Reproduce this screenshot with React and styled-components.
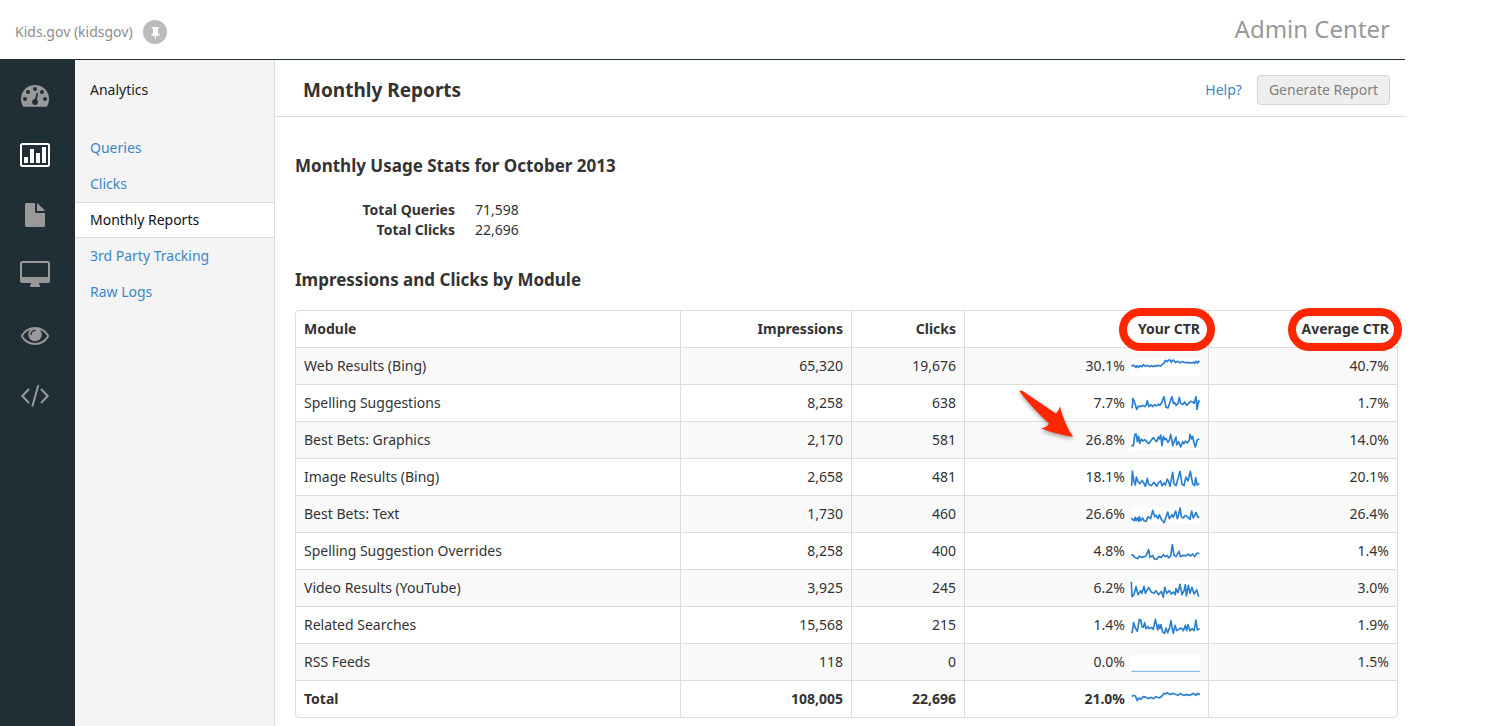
import React from "react";
import styled, { createGlobalStyle, css } from "styled-components";

const GlobalStyle = createGlobalStyle`
  * { box-sizing: border-box; }
  body {
    margin: 0;
    background: #fff;
    color: #333;
    font-family: "Noto Sans", "Open Sans", sans-serif;
    font-size: 14px;
    line-height: 20px;
  }
  a { color: #3a87c8; text-decoration: none; }
  h1, h2, h3, ul, dl, dd, p { margin: 0; padding: 0; }
`;

const Page = styled.div`
  display: flex;
  flex-direction: column;
  min-height: 100vh;
  margin-right: 82px;
`;

const TopBar = styled.header`
  display: flex;
  align-items: center;
  justify-content: space-between;
  height: 60px;
  padding: 0 15px;
  border-bottom: 1px solid #202f36;
`;

const Site = styled.div`
  display: flex;
  align-items: center;
  gap: 10px;
  padding-top: 4px;
  color: #8c8c8c;
`;

const PinButton = styled.button`
  display: block;
  width: 24px;
  height: 24px;
  padding: 0;
  border: 0;
  border-radius: 50%;
  background: #bbb;
`;

const Brand = styled.div`
  padding-bottom: 2px;
  color: #999;
  font-size: 24px;
  line-height: 30px;
`;

const Body = styled.div`
  display: flex;
  flex: 1;
`;

const Rail = styled.nav`
  flex: none;
  width: 75px;
  padding-top: 6px;
  background: #202f36;
`;

const RailLink = styled.a`
  display: flex;
  align-items: center;
  height: 60px;
  padding-left: 20px;
  color: ${(p) => (p.$active ? "#fff" : "#999")};
`;

const Side = styled.nav`
  flex: none;
  width: 200px;
  background: #f4f4f4;
  border-right: 1px solid #ddd;
`;

const SideTitle = styled.h2`
  padding: 20px 15px 30px;
  font-size: 14px;
  line-height: 20px;
  font-weight: 400;
  color: #222;
`;

const SideList = styled.ul`
  list-style: none;
`;

const SideLink = styled.a`
  display: block;
  height: 36px;
  padding: 7px 15px;
  border: solid transparent;
  border-width: 1px 0;
  ${(p) =>
    p.$active &&
    css`
      background: #fff;
      border-color: #ddd;
      color: #111;
    `}
`;

const Main = styled.main`
  flex: 1;
  min-width: 0;
`;

const MainHeader = styled.div`
  display: flex;
  align-items: center;
  height: 57px;
  padding: 4px 15px 0 28px;
  border-bottom: 1px solid #ddd;
`;

const Title = styled.h1`
  flex: 1;
  font-size: 19px;
  line-height: 24px;
  font-weight: 700;
`;

const Help = styled.a`
  margin-right: 15px;
`;

const Generate = styled.button`
  height: 30px;
  padding: 0 11px;
  border: 1px solid #d4d4d4;
  border-radius: 4px;
  background: #eee;
  color: #808080;
  font: inherit;
`;

const Content = styled.div`
  padding: 39px 7px 8px 20px;
`;

const Heading = styled.h3`
  font-size: 17px;
  line-height: 20px;
  font-weight: 700;
`;

const Stats = styled.dl`
  display: grid;
  grid-template-columns: 160px 1fr;
  column-gap: 20px;
  margin: 24px 0 30px;
`;

const StatName = styled.dt`
  font-weight: 700;
  text-align: right;
`;

const Table = styled.table`
  width: 100%;
  margin-top: 20px;
  table-layout: fixed;
  border: 1px solid #ddd;
  border-radius: 4px;
  border-spacing: 0;

  th, td {
    position: relative;
    height: 37px;
    padding: 8px;
    border-top: 1px solid #ddd;
    border-left: 1px solid #ddd;
    text-align: right;
    line-height: 20px;
  }
  thead th { height: 36px; border-top: 0; }
  th:first-child, td:first-child { border-left: 0; text-align: left; }
  tbody tr:nth-child(odd) td { background: #f9f9f9; }
  tfoot td { font-weight: 700; }
`;

const Col = styled.col`
  width: ${(p) => p.$w}px;
`;

const Rate = styled.div`
  display: flex;
  justify-content: flex-end;
  align-items: flex-end;
  gap: 5px;
`;

const Spark = styled.svg`
  display: block;
  background: #fff;
`;

const Ring = styled.span`
  position: absolute;
  top: -3px;
  right: ${(p) => p.$right}px;
  width: ${(p) => p.$width}px;
  height: 43px;
  border: 8px solid #ff2600;
  border-radius: 22px;
  z-index: 1;
`;

const Arrow = styled.svg`
  position: absolute;
  top: -34px;
  left: 52px;
  z-index: 1;
  filter: drop-shadow(0 2px 2px rgba(0, 0, 0, 0.35));
`;

const icons = {
  Dashboard: (
    <path
      fill="currentColor"
      fillRule="evenodd"
      d="M15 4A14 14 0 0 0 1 18c0 2.900.8 5.400 2 7.200.2.300.5.500.9.500h22.200c.4 0 .7-.2.900-.5 1.200-1.800 2-4.300 2-7.200A14 14 0 0 0 15 4ZM5 16a2 2 0 1 1 0 4 2 2 0 0 1 0-4ZM8 9a2 2 0 1 1 0 4 2 2 0 0 1 0-4ZM15 6a2 2 0 1 1 0 4 2 2 0 0 1 0-4ZM22 9a2 2 0 1 1 0 4 2 2 0 0 1 0-4ZM25 16a2 2 0 1 1 0 4 2 2 0 0 1 0-4ZM16.500 12.200 15 18A3 3 0 1 0 17 18.700L18 12.600A.8.8 0 0 0 16.500 12.200Z"
    />
  ),
  Analytics: (
    <>
      <rect x="1" y="3" width="28" height="22" rx="1.500" fill="none" stroke="currentColor" strokeWidth="2" />
      <path fill="currentColor" d="M4 16h4v6H4zM10 8h4v14h-4zM16 12h4v10h-4zM22 6h4v16h-4z" />
    </>
  ),
  Content: (
    <path
      fill="currentColor"
      d="M6.500 2H15v8.500a1.500 1.500 0 0 0 1.500 1.500H25v12.500a1.500 1.500 0 0 1-1.500 1.500h-17A1.500 1.500 0 0 1 5 24.500v-21A1.500 1.500 0 0 1 6.500 2ZM17 2.200c.4.100.7.300 1 .6l6.300 6.300c.3.300.5.600.6.900H17Z"
    />
  ),
  Display: (
    <path
      fill="currentColor"
      fillRule="evenodd"
      d="M2.500 0h25A2.500 2.500 0 0 1 30 2.500v17a2.500 2.500 0 0 1-2.500 2.500H19c0 1.500 1 2.300 1 3s-.4 1-1 1h-8c-.6 0-1-.3-1-1s1-1.500 1-3H2.500A2.500 2.500 0 0 1 0 19.500v-17A2.500 2.500 0 0 1 2.500 0ZM2.500 2a.5.5 0 0 0-.5.5v13a.5.5 0 0 0 .5.5h25a.5.5 0 0 0 .5-.5v-13a.5.5 0 0 0-.5-.5Z"
    />
  ),
  Preview: (
    <>
      <path
        fill="none"
        stroke="currentColor"
        strokeWidth="2"
        d="M2.200 14.200C5 9.800 9.700 7 15 7s10 2.800 12.800 7.200c.3.500.3 1.100 0 1.600C25 20.200 20.300 23 15 23S5 20.200 2.200 15.800c-.3-.5-.3-1.100 0-1.600Z"
      />
      <circle cx="15" cy="13.500" r="6.800" fill="currentColor" />
      <path d="M11 13.500a4 4 0 0 1 4-4" fill="none" stroke="#202f36" strokeWidth="1.300" strokeLinecap="round" />
    </>
  ),
  Code: (
    <path
      fill="none"
      stroke="currentColor"
      strokeWidth="2"
      d="M9 8 2.300 15 9 22M21 8l6.700 7L21 22M18.300 4.300l-6 21.200"
    />
  ),
};

const sparks = {
  web: ["12 21", "16,41 24,40 30,46 33,41 38,46 42,41 48,44 52,38 58,43 64,40 70,44 76,41 82,44 86,40 90,43 96,40 104,42 110,36 114,34 118,25 123,29 128,24 132,24 136,31 140,25 144,25 148,32 154,28 162,32 170,29 178,32 186,31 194,33 202,31 207,34 211,28 215,33 220,26"],
  spelling: ["360 48", "366,85 369,55 374,68 380,88 386,78 392,80 398,76 404,80 408,76 412,62 416,80 422,74 428,80 434,74 440,78 446,72 450,76 456,66 462,50 468,82 474,84 480,66 486,50 490,70 494,68 498,76 504,70 508,52 512,70 518,74 524,66 530,76 536,70 542,64 548,66 552,70 558,50 561,88 566,62 569,66"],
  graphics: ["12 24", "16,62 22,62 27,27 31,27 34,50 38,34 41,55 46,42 50,48 56,44 62,50 68,56 76,45 82,38 86,44 92,50 97,36 100,42 104,30 108,62 112,34 116,44 120,40 126,52 130,46 134,28 138,46 140,62 145,48 150,36 152,60 158,50 164,66 170,50 174,56 178,48 184,54 190,46 192,28 197,42 200,34 204,54 208,66 214,44 220,42"],
  image: ["12 135", "17,182 19,138 24,170 28,180 31,156 36,170 42,176 48,166 52,172 58,184 64,160 68,178 76,182 84,172 92,184 98,172 104,168 108,182 114,174 118,180 124,162 128,170 132,184 140,142 144,176 150,182 162,139 168,178 174,182 180,156 186,168 193,139 200,176 206,182 209,158 214,180 220,176"],
  text: ["12 21", "16,54 20,58 24,62 28,52 30,62 34,54 38,64 40,50 44,62 50,54 54,62 60,64 66,50 74,56 80,31 86,50 90,46 96,56 100,44 106,58 114,68 120,52 125,36 130,56 138,44 142,52 149,33 154,56 158,44 162,24 166,50 172,54 178,46 186,52 192,58 197,33 202,54 210,38 216,52 220,52"],
  overrides: ["12 132", "16,166 20,164 26,172 36,176 40,168 46,172 54,170 60,168 68,149 72,172 80,166 84,176 92,178 98,170 106,172 112,164 118,170 124,166 128,174 134,168 139,134 144,166 150,170 159,154 163,170 172,166 180,168 186,162 194,168 200,162 206,170 212,160 220,160"],
  video: ["12 243", "16,245 18,290 24,284 30,260 36,284 44,272 48,280 54,259 58,280 68,262 76,276 84,280 90,272 98,284 106,274 112,292 116,262 122,280 130,272 136,282 142,276 148,284 150,266 156,278 162,253 168,284 174,272 178,254 181,288 187,256 192,280 198,262 204,282 212,270 218,290"],
  related: ["60 36", "66,82 71,50 76,66 82,76 88,40 92,42 96,62 100,64 104,50 108,68 114,62 118,68 124,64 130,70 136,40 140,58 143,72 146,56 150,68 153,56 158,78 164,82 168,66 173,80 178,68 183,44 187,70 190,82 195,58 200,74 206,70 214,66 220,74 226,58 230,74 234,56 240,74 246,68 252,74 258,42 262,72 269,68"],
  rss: ["60 147", "64,196 270,196"],
  total: ["60 258", "66,272 70,268 76,270 82,284 86,276 92,280 100,272 108,274 116,278 122,274 130,278 138,272 148,276 156,270 162,262 168,264 172,260 180,266 186,262 194,264 204,268 212,262 220,268 230,266 240,268 250,262 258,268 262,262 266,266 269,262"],
};

const rows = [
  ["Web Results (Bing)", "65,320", "19,676", "30.1%", "web", "40.7%"],
  ["Spelling Suggestions", "8,258", "638", "7.7%", "spelling", "1.7%"],
  ["Best Bets: Graphics", "2,170", "581", "26.8%", "graphics", "14.0%"],
  ["Image Results (Bing)", "2,658", "481", "18.1%", "image", "20.1%"],
  ["Best Bets: Text", "1,730", "460", "26.6%", "text", "26.4%"],
  ["Spelling Suggestion Overrides", "8,258", "400", "4.8%", "overrides", "1.4%"],
  ["Video Results (YouTube)", "3,925", "245", "6.2%", "video", "3.0%"],
  ["Related Searches", "15,568", "215", "1.4%", "related", "1.9%"],
  ["RSS Feeds", "118", "0", "0.0%", "rss", "1.5%"],
];

function Trend({ name }) {
  const [origin, points] = sparks[name];
  const flat = name === "rss";
  return (
    <Spark width="70" height="17" viewBox={`${origin} 210 51`} aria-hidden="true">
      <polyline
        points={points}
        fill="none"
        stroke={flat ? "#8dbbe2" : "#2a80cc"}
        strokeWidth={flat ? 4 : 5}
        strokeLinejoin="round"
      />
    </Spark>
  );
}

export default function App() {
  return (
    <>
      <GlobalStyle />
      <Page>
        <TopBar>
          <Site>
            Kids.gov (kidsgov)
            <PinButton type="button" aria-label="Pin site">
              <svg width="24" height="24" viewBox="0 0 24 24" aria-hidden="true">
                <path fill="#fff" d="M9 7h7v1.500h-1V13c1.100.5 1.700 1.400 1.700 2.700h-3.500L12.500 21l-.7-5.300H8.300c0-1.300.6-2.200 1.700-2.700V8.500H9Z" />
              </svg>
            </PinButton>
          </Site>
          <Brand>Admin Center</Brand>
        </TopBar>
        <Body>
          <Rail aria-label="Sections">
            {Object.entries(icons).map(([name, drawing]) => (
              <RailLink key={name} href="#" aria-label={name} $active={name === "Analytics"}>
                <svg width="30" height="30" viewBox="0 0 30 30" aria-hidden="true">
                  {drawing}
                </svg>
              </RailLink>
            ))}
          </Rail>
          <Side aria-label="Analytics">
            <SideTitle>Analytics</SideTitle>
            <SideList>
              {["Queries", "Clicks", "Monthly Reports", "3rd Party Tracking", "Raw Logs"].map((item) => (
                <li key={item}>
                  <SideLink href="#" $active={item === "Monthly Reports"}>
                    {item}
                  </SideLink>
                </li>
              ))}
            </SideList>
          </Side>
          <Main>
            <MainHeader>
              <Title>Monthly Reports</Title>
              <Help href="#">Help?</Help>
              <Generate type="button" disabled>
                Generate Report
              </Generate>
            </MainHeader>
            <Content>
              <Heading>Monthly Usage Stats for October 2013</Heading>
              <Stats>
                <StatName>Total Queries</StatName>
                <dd>71,598</dd>
                <StatName>Total Clicks</StatName>
                <dd>22,696</dd>
              </Stats>
              <Heading>Impressions and Clicks by Module</Heading>
              <Table>
                <colgroup>
                  <col />
                  <Col $w={171} />
                  <Col $w={113} />
                  <Col $w={244} />
                  <Col $w={189} />
                </colgroup>
                <thead>
                  <tr>
                    <th>Module</th>
                    <th>Impressions</th>
                    <th>Clicks</th>
                    <th>
                      Your CTR
                      <Ring $right={-7} $width={96} />
                    </th>
                    <th>
                      Average CTR
                      <Ring $right={-5} $width={114} />
                    </th>
                  </tr>
                </thead>
                <tbody>
                  {rows.map(([module, impressions, clicks, rate, trend, average]) => (
                    <tr key={module}>
                      <td>{module}</td>
                      <td>{impressions}</td>
                      <td>{clicks}</td>
                      <td>
                        <Rate>
                          {rate}
                          <Trend name={trend} />
                        </Rate>
                        {trend === "graphics" && (
                          <Arrow width="60" height="52" viewBox="0 0 60 52" aria-hidden="true">
                            <path
                              fill="#ff2600"
                              d="M2.500 3.500Q3.500 1.800 6 3.200L39 25.500Q42 22.500 43 18.500 47 35 56 49 38 46 24 40.500 30 39.500 32 35.500 17 22 2.500 3.500Z"
                            />
                          </Arrow>
                        )}
                      </td>
                      <td>{average}</td>
                    </tr>
                  ))}
                </tbody>
                <tfoot>
                  <tr>
                    <td>Total</td>
                    <td>108,005</td>
                    <td>22,696</td>
                    <td>
                      <Rate>
                        21.0%
                        <Trend name="total" />
                      </Rate>
                    </td>
                    <td />
                  </tr>
                </tfoot>
              </Table>
            </Content>
          </Main>
        </Body>
      </Page>
    </>
  );
}
